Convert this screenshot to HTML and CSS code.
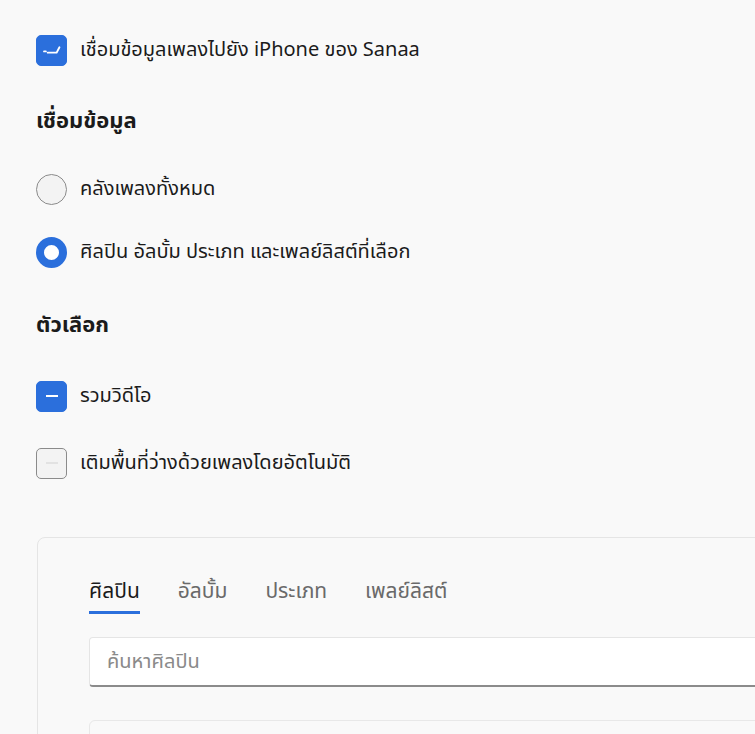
FILE: index.html
```html
<!DOCTYPE html>
<html lang="th">
<head>
  <meta charset="UTF-8">
  <meta name="viewport" content="width=device-width, initial-scale=1.0">
  <title>ซิงค์เพลง</title>
  <link rel="stylesheet" href="styles.css">
</head>
<body>

  <div class="page">
    <label class="row row-sync">
      <span class="box box-on">
        <svg width="31" height="31" viewBox="0 0 31 31"><path d="M7.5 16.5h2M11.5 17.8h9.5l3-5.8" fill="none" stroke="#fff" stroke-width="2" stroke-linecap="round" stroke-linejoin="round"/></svg>
      </span>
      เชื่อมข้อมูลเพลงไปยัง iPhone ของ Sanaa
    </label>

    <h2 class="heading heading-sync">เชื่อมข้อมูล</h2>

    <label class="row row-all">
      <span class="radio"></span>
      คลังเพลงทั้งหมด
    </label>
    <label class="row row-picked">
      <span class="radio radio-on"></span>
      ศิลปิน อัลบั้ม ประเภท และเพลย์ลิสต์ที่เลือก
    </label>

    <h2 class="heading heading-opts">ตัวเลือก</h2>

    <label class="row row-video">
      <span class="box box-on"><span class="dash"></span></span>
      รวมวิดีโอ
    </label>
    <label class="row row-fill">
      <span class="box"><span class="dash dash-off"></span></span>
      เติมพื้นที่ว่างด้วยเพลงโดยอัตโนมัติ
    </label>

    <div class="card">
      <div class="tabs">
        <span class="tab tab-active">ศิลปิน</span>
        <span class="tab">อัลบั้ม</span>
        <span class="tab">ประเภท</span>
        <span class="tab">เพลย์ลิสต์</span>
      </div>
      <div class="search">ค้นหาศิลปิน</div>
      <div class="list"></div>
    </div>
  </div>

</body>
</html>
```

FILE: styles.css
```css
html, body {
  margin: 0;
  padding: 0;
  background-color: #f9f9f9;
  overflow: hidden;
}
body {
  font-family: 'Noto Sans Thai', 'Leelawadee UI', 'Noto Sans', 'Open Sans', sans-serif;
  font-size: 20px;
  color: #1b1b1b;
}
.page {
  width: 900px;
  padding: 34px 0 0 36px;
}
.row {
  display: flex;
  align-items: center;
  gap: 13px;
  height: 32px;
}
.box {
  width: 31px;
  height: 31px;
  box-sizing: border-box;
  border: 1px solid #8b8b8b;
  border-radius: 5px;
  background-color: #f3f3f3;
  display: flex;
  align-items: center;
  justify-content: center;
  flex: none;
}
.box-on {
  background-color: #2b6fdc;
  border-color: #2b6fdc;
}
.box svg {
  display: block;
}
.dash {
  width: 12px;
  height: 2px;
  background-color: #fff;
}
.dash-off {
  background-color: #e2e2e2;
}
.radio {
  width: 31px;
  height: 31px;
  box-sizing: border-box;
  border: 1.5px solid #8b8b8b;
  border-radius: 50%;
  background-color: #f3f3f3;
  flex: none;
}
.radio-on {
  border: 8px solid #2b6fdc;
  background-color: #fff;
}
.heading {
  margin: 0;
  font-size: 22px;
  font-weight: bold;
  line-height: 24px;
}
.heading-sync { margin-top: 44px; }
.row-all { margin-top: 39px; }
.row-picked { margin-top: 31px; }
.heading-opts { margin-top: 46px; }
.row-video { margin-top: 42px; }
.row-fill { margin-top: 35px; }

.card {
  margin-top: 58px;
  margin-left: 1px;
  border: 1px solid #e5e5e5;
  border-radius: 8px;
  background-color: #f9f9f9;
  padding: 42px 0 0 51px;
  height: 300px;
}
.tabs {
  display: flex;
  gap: 38px;
}
.tab {
  font-size: 21px;
  line-height: 24px;
  padding-bottom: 7px;
  border-bottom: 3px solid transparent;
  color: #6a6a6a;
}
.tab-active {
  color: #1b1b1b;
  border-bottom-color: #2b6fdc;
}
.search {
  margin-top: 23px;
  height: 50px;
  box-sizing: border-box;
  background-color: #fff;
  border: 1px solid #e5e5e5;
  border-bottom: 2px solid #8b8b8b;
  border-radius: 4px;
  padding: 0 17px;
  display: flex;
  align-items: center;
  color: #8a8a8a;
}
.list {
  margin-top: 33px;
  height: 120px;
  border: 1px solid #e8e8e8;
  border-radius: 6px;
  background-color: #f9f9f9;
}
```
